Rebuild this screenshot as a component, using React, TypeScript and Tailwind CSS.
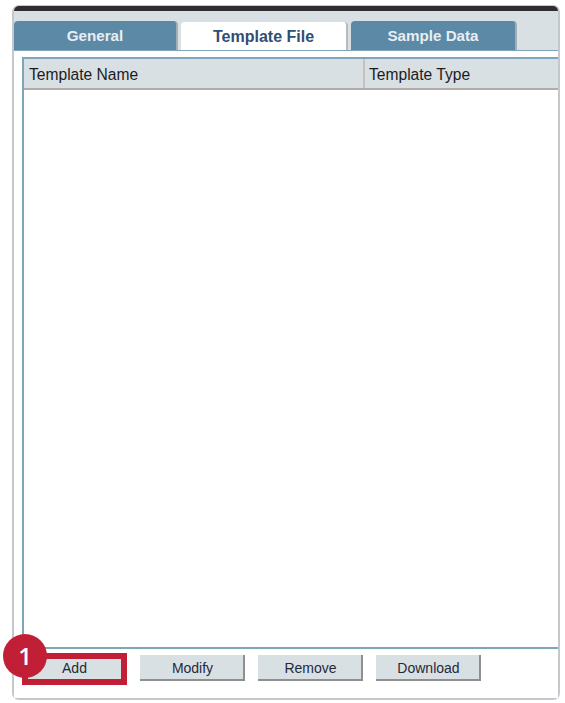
const tabs = [
  { label: "General", active: false, width: "w-[164px]" },
  { label: "Template File", active: true, width: "w-[167px]" },
  { label: "Sample Data", active: false, width: "w-[166px]" },
];

const buttons = ["Add", "Modify", "Remove", "Download"];

function ActionButton({ label }: { label: string }) {
  return (
    <button className="h-[26px] w-[105px] border-r-2 border-b-2 border-[#8f8f8f] bg-[#d9e0e4] pt-[1px] pl-[2px] text-[14px] leading-[24px] text-[#1f2a3a]">
      {label}
    </button>
  );
}

export default function App() {
  return (
    <div className="h-[703px] w-[565px] bg-white pt-[5px] pl-[12px] font-['Liberation_Sans',Arial,sans-serif]">
      <div className="flex h-[695px] w-[548px] flex-col rounded-[7px] border-x-2 border-t-1 border-b-2 border-[#c4c7cc]">
        <div className="h-[5px] shrink-0 rounded-t-[5px] bg-[#2e2e2e]" />

        <div className="flex h-[40px] shrink-0 items-end gap-[3px] border-b-1 border-[#7fa5b8] bg-[#d9e0e4]">
          {tabs.map((tab) => (
            <div
              key={tab.label}
              className={
                tab.active
                  ? `${tab.width} flex h-[28px] items-center justify-center rounded-t-[4px] border-r-2 border-[#b5bbbf] bg-white pt-[1px] text-[16px] font-bold text-[#2f4f73]`
                  : `${tab.width} flex h-[29px] items-center justify-center rounded-t-[4px] border-r-2 border-[#a3adb3] bg-[#5b89a6] pt-[1px] text-[15.2px] font-bold text-[#e8eef2]`
              }
            >
              {tab.label}
            </div>
          ))}
        </div>

        <div className="relative flex flex-1 flex-col bg-white pt-[6px] pl-[8px]">
          <div className="flex h-[592px] shrink-0 flex-col border-t-2 border-b-2 border-l-2 border-[#7fa5b8]">
            <div className="flex h-[31px] shrink-0 border-b-2 border-[#b3aca6] bg-[#d9e0e4] text-[15.6px] leading-[31px] text-[#1c1c1c]">
              <div className="w-[341px] border-r-2 border-[#c4c4bc] pl-[5px]">Template Name</div>
              <div className="flex-1 pl-[4px]">Template Type</div>
            </div>
          </div>

          <div className="flex gap-[13px] pt-[6px]">
            {buttons.map((label) => (
              <ActionButton key={label} label={label} />
            ))}
          </div>

          <div className="absolute top-[602px] left-[8px] h-[32px] w-[105px] border-[6px] border-[#c01f36]" />
          <div className="absolute top-[583px] left-[-11px] flex h-[44px] w-[44px] items-center justify-center rounded-full bg-[#c01f36] font-['Open_Sans',sans-serif] text-[24px] font-semibold text-white">
            1
          </div>
        </div>
      </div>
    </div>
  );
}
